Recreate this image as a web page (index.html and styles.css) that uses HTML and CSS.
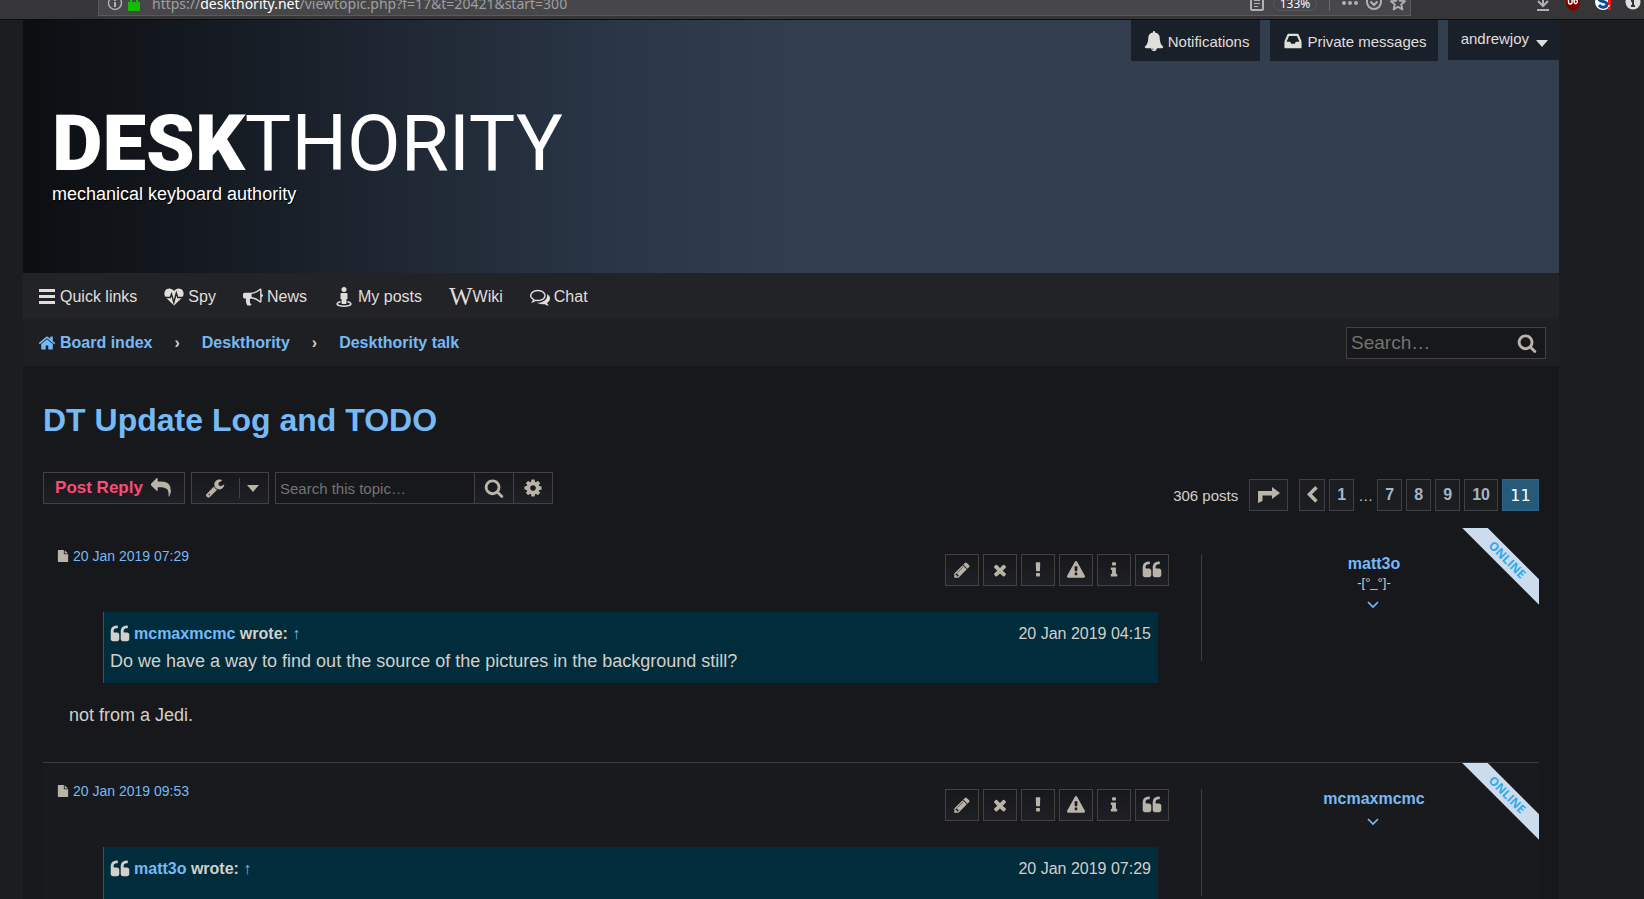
FILE: index.html
```html
<!DOCTYPE html>
<html lang="en">
<head>
<meta charset="utf-8">
<title>DT Update Log and TODO - Deskthority</title>
<link rel="stylesheet" href="styles.css">
</head>
<body>
<svg class="sprite" aria-hidden="true">
  <symbol id="bars" viewBox="0 0 18 18"><path d="M1 1h16v3H1zM1 7h16v3H1zM1 13h16v3H1z"/></symbol>
  <symbol id="search" viewBox="0 0 1792 1792"><path d="M1216 832q0-185-131.500-316.500t-316.500-131.500-316.500 131.500-131.500 316.500 131.500 316.500 316.500 131.500 316.500-131.500 131.500-316.500zm512 832q0 52-38 90t-90 38q-54 0-90-38l-343-342q-179 124-399 124-143 0-273.500-55.500t-225-150-150-225-55.500-273.500 55.500-273.500 150-225 225-150 273.500-55.500 273.500 55.500 225 150 150 225 55.500 273.500q0 220-124 399l343 343q37 37 37 90z"/></symbol>
  <symbol id="home" viewBox="0 0 1792 1792"><path d="M1472 992v480q0 26-19 45t-45 19h-384v-384h-256v384h-384q-26 0-45-19t-19-45v-480q0-1 .5-3t.5-3l575-474 575 474q1 2 1 6zm223-69l-62 74q-8 9-21 11h-3q-13 0-21-7l-692-577-692 577q-12 8-24 7-13-2-21-11l-62-74q-8-10-7-23.500t11-21.500l719-599q32-26 76-26t76 26l244 204v-195q0-14 9-23t23-9h192q14 0 23 9t9 23v408l219 182q10 8 11 21.500t-7 23.500z"/></symbol>
  <symbol id="cog" viewBox="0 0 1792 1792"><path d="M1152 896q0-106-75-181t-181-75-181 75-75 181 75 181 181 75 181-75 75-181zm512-109v222q0 12-8 23t-20 13l-185 28q-19 54-39 91 35 50 107 138 10 12 10 25t-9 23q-27 37-99 108t-94 71q-12 0-26-9l-138-108q-44 23-91 38-16 136-29 186-7 28-36 28h-222q-14 0-24.500-8.500t-11.500-21.500l-28-184q-49-16-90-37l-141 107q-10 9-25 9-14 0-25-11-126-114-165-168-7-10-7-23 0-12 8-23 15-21 51-66.500t54-70.500q-27-50-41-99l-183-27q-13-2-21-12.500t-8-23.500v-222q0-12 8-23t19-13l186-28q14-46 39-92-40-57-107-138-10-12-10-24 0-10 9-23 26-36 98.500-107.500t94.500-71.500q13 0 26 10l138 107q44-23 91-38 16-136 29-186 7-28 36-28h222q14 0 24.500 8.500t11.500 21.500l28 184q49 16 90 37l142-107q9-9 24-9 13 0 25 10 129 119 165 170 7 8 7 22 0 12-8 23-15 21-51 66.500t-54 70.500q26 50 41 98l183 28q13 2 21 12.500t8 23.500z"/></symbol>
  <symbol id="quote" viewBox="0 0 1792 1792"><path d="M832 960v384q0 80-56 136t-136 56h-384q-80 0-136-56t-56-136v-704q0-104 40.500-198.500t109.500-163.500 163.500-109.500 198.500-40.500h64q26 0 45 19t19 45v128q0 26-19 45t-45 19h-64q-106 0-181 75t-75 181v32q0 40 28 68t68 28h224q80 0 136 56t56 136zm896 0v384q0 80-56 136t-136 56h-384q-80 0-136-56t-56-136v-704q0-104 40.500-198.500t109.500-163.500 163.500-109.500 198.500-40.500h64q26 0 45 19t19 45v128q0 26-19 45t-45 19h-64q-106 0-181 75t-75 181v32q0 40 28 68t68 28h224q80 0 136 56t56 136z"/></symbol>
  <symbol id="pencil" viewBox="0 0 1792 1792"><path d="M491 1536l91-91-235-235-91 91v107h128v128h107zm523-928q0-22-22-22-10 0-17 7l-542 542q-7 7-7 17 0 22 22 22 10 0 17-7l542-542q7-7 7-17zm-54-192l416 416-832 832h-416v-416zm683 96q0 53-37 90l-166 166-416-416 166-165q36-38 90-38 53 0 91 38l235 234q37 39 37 91z"/></symbol>
  <symbol id="times" viewBox="0 0 1792 1792"><path d="M1490 1322q0 40-28 68l-136 136q-28 28-68 28t-68-28l-294-294-294 294q-28 28-68 28t-68-28l-136-136q-28-28-28-68t28-68l294-294-294-294q-28-28-28-68t28-68l136-136q28-28 68-28t68 28l294 294 294-294q28-28 68-28t68 28l136 136q28 28 28 68t-28 68l-294 294 294 294q28 28 28 68z"/></symbol>
  <symbol id="exclaim" viewBox="0 0 1792 1792"><path d="M1088 1248v224q0 26-19 45t-45 19h-256q-26 0-45-19t-19-45v-224q0-26 19-45t45-19h256q26 0 45 19t19 45zm30-1056l-28 768q-1 26-20.500 45t-45.500 19h-256q-26 0-45.500-19t-20.500-45l-28-768q-1-26 17.500-45t44.500-19h320q26 0 44.500 19t17.500 45z"/></symbol>
  <symbol id="warning" viewBox="0 0 1792 1792"><path d="M1024 1375v-190q0-14-9.500-23.500t-22.500-9.500h-192q-13 0-22.500 9.500t-9.500 23.500v190q0 14 9.500 23.500t22.500 9.500h192q13 0 22.500-9.500t9.500-23.500zm-2-374l18-459q0-12-10-19-13-11-24-11h-220q-11 0-24 11-10 7-10 21l17 457q0 10 10 16.500t24 6.500h185q14 0 23.500-6.500t10.500-16.500zm-14-934l768 1408q35 63-2 126-17 29-46.500 46t-63.500 17h-1536q-34 0-63.500-17t-46.500-46q-37-63-2-126l768-1408q17-31 47-49t65-18 65 18 47 49z"/></symbol>
  <symbol id="info" viewBox="0 0 1792 1792"><path d="M1216 1344v128q0 26-19 45t-45 19h-512q-26 0-45-19t-19-45v-128q0-26 19-45t45-19h64v-384h-64q-26 0-45-19t-19-45v-128q0-26 19-45t45-19h384q26 0 45 19t19 45v576h64q26 0 45 19t19 45zm-128-1152v192q0 26-19 45t-45 19h-256q-26 0-45-19t-19-45v-192q0-26 19-45t45-19h256q26 0 45 19t19 45z"/></symbol>
  <symbol id="bell" viewBox="0 0 1792 1792"><path d="M912 1696q0-16-16-16-59 0-101.500-42.500t-42.500-101.500q0-16-16-16t-16 16q0 73 51.500 124.500t124.500 51.500q16 0 16-16zm816-288q0 52-38 90t-90 38h-448q0 106-75 181t-181 75-181-75-75-181h-448q-52 0-90-38t-38-90q50-42 91-88t85-119.500 74.500-158.500 50-206 19.500-260q0-152 117-282.500t307-158.500q-8-19-8-39 0-40 28-68t68-28 68 28 28 68q0 20-8 39 190 28 307 158.500t117 282.500q0 139 19.500 260t50 206 74.500 158.500 85 119.500 91 88z"/></symbol>
  <symbol id="inbox" viewBox="0 0 1792 1792"><path d="M1151 960h316q-1-3-2.500-8t-2.500-8l-212-496h-708l-212 496q-1 2-2.500 8t-2.500 8h316l95 192h320zm513 30v482q0 26-19 45t-45 19h-1408q-26 0-45-19t-19-45v-482q0-62 25-123l238-552q10-25 36.500-42t52.500-17h832q26 0 52.500 17t36.500 42l238 552q25 61 25 123z"/></symbol>
  <symbol id="file" viewBox="0 0 1792 1792"><path d="M1152 512v-472q22 14 36 28l408 408q14 14 28 36h-472zm-128 32q0 40 28 68t68 28h544v1056q0 40-28 68t-68 28h-1344q-40 0-68-28t-28-68v-1600q0-40 28-68t68-28h800v544z"/></symbol>
  <symbol id="reply" viewBox="0 0 1792 1792"><path d="M1792 1120q0 166-127 451-3 7-10.500 24t-13.500 30-13 22q-12 17-28 17-15 0-23.500-10t-8.500-25q0-9 2.500-26.500t2.500-23.500q5-68 5-123 0-112-19.500-200.500t-54-153.500-89-112-117-78-142.500-48.500-158.500-24-171.500-6.500h-224v256q0 26-19 45t-45 19-45-19l-512-512q-19-19-19-45t19-45l512-512q19-19 45-19t45 19 19 45v256h224q713 0 875 403 53 134 53 333z"/></symbol>
  <symbol id="wrench" viewBox="0 0 1792 1792"><path d="M448 1472q0-26-19-45t-45-19-45 19-19 45 19 45 45 19 45-19 19-45zm644-420l-682 682q-37 37-90 37-52 0-91-37l-106-108q-38-36-38-90 0-53 38-91l681-681q39 98 114.500 173.500t173.500 114.500zm634-435q0 39-23 106-47 134-164.500 217.500t-258.500 83.500q-185 0-316.500-131.500t-131.500-316.500 131.500-316.500 316.500-131.500q58 0 121.500 16.500t107.500 46.500q16 11 16 28t-16 28l-293 169v224l193 107q5-3 79-48.500t135.500-81 70.500-35.500q15 0 23.500 10t8.500 25z"/></symbol>
  <symbol id="left" viewBox="0 0 1792 1792"><path d="M1427 301l-531 531 531 531q19 19 19 45t-19 45l-166 166q-19 19-45 19t-45-19l-742-742q-19-19-19-45t19-45l742-742q19-19 45-19t45 19l166 166q19 19 19 45t-19 45z"/></symbol>
  <symbol id="bullhorn" viewBox="0 0 1792 1792"><path d="M1664 640q53 0 90.500 37.500t37.500 90.500-37.500 90.500-90.500 37.500v384q0 52-38 90t-90 38q-417-347-812-380-58 19-91 66t-31 100.500 40 92.500q-20 33-23 65.500t6 58 33.500 55 48 50 61.500 50.500q-29 58-111.500 83t-168.500 11.500-132-55.500q-7-23-29.500-87.500t-32-94.500-23-89-15-101 3.500-98.500 22-110.500h-122q-66 0-113-47t-47-113v-192q0-66 47-113t113-47h480q435 0 896-384 52 0 90 38t38 90v384zm-128 604v-954q-394 302-768 343v270q377 42 768 341z"/></symbol>
  <symbol id="comments" viewBox="0 0 1792 1792"><path d="M704 384q-153 0-286 52t-211.500 141-78.500 191q0 82 53 158t149 132l97 56-35 84q34-20 62-39l44-31 53 10q78 14 153 14 153 0 286-52t211.500-141 78.500-191-78.500-191-211.500-141-286-52zm0-128q191 0 353.500 68.500t256.500 186.500 94 257-94 257-256.500 186.500-353.500 68.500q-86 0-176-16-124 88-278 128-36 9-86 16h-3q-11 0-20.500-8t-11.500-21q-1-3-1-6.500t.5-6.500 2-6l2.500-5 3.500-5.500 4-5 4.500-5 4-4.500q5-6 23-25t26-29.500 22.500-29 25-38.500 20.500-44q-124-72-195-177t-71-224q0-139 94-257t256.500-186.500 353.500-68.500zm822 1169q10 24 20.500 44t25 38.500 22.500 29 26 29.500 23 25q1 1 4 4.500t4.500 5 4 5 3.500 5.500l2.500 5 2 6 .5 6.500-1 6.500q-3 14-13 22t-22 7q-50-7-86-16-154-40-278-128-90 16-176 16-271 0-472-132 58 4 88 4 161 0 309-45t264-129q125-92 192-212t67-254q0-77-23-152 129 71 204 178t75 230q0 120-71 224.500t-195 176.500z"/></symbol>
  <symbol id="heartbeat" viewBox="0 0 20 20"><path d="M10 18.500 2 10.800C-.5 8 0 3.500 3 2c2.500-1.200 5.300-.4 7 2 1.700-2.400 4.500-3.200 7-2 3 1.500 3.500 6 1 8.800z"/><path d="M1 10.500h5.200L7.500 7l2.300 8.500L12.300 6l1.500 4.500H19" fill="none" stroke="#222327" stroke-width="1.400"/></symbol>
  <symbol id="person" viewBox="0 0 16 20"><circle cx="8" cy="2.600" r="2.500"/><path d="M5.500 6h5q1 0 1 1v5h-1v4q0 1-1 1h-3q-1 0-1-1v-4h-1V7q0-1 1-1z"/><path d="M4.500 14.800C-1 16 0 19.200 8 19.200s9-3.200 3.500-4.400" fill="none" stroke="currentColor" stroke-width="1.500"/></symbol>
  <symbol id="caret" viewBox="0 0 12 7"><path d="M0 0h12L6 7z"/></symbol>
  <symbol id="jump" viewBox="0 0 22 16"><path d="M0 16V4h14V0l8 6-8 6V8.500H4.500V14z"/></symbol>
  <symbol id="down" viewBox="0 0 12 8"><path d="M1 1l5 5 5-5" fill="none" stroke="currentColor" stroke-width="1.700"/></symbol>
</svg>

<div class="browser">
  <div class="urlbar">
    <svg class="i16" viewBox="0 0 16 16"><circle cx="8" cy="8" r="6.500" fill="none" stroke="currentColor" stroke-width="1.400"/><path d="M7 7h2v5H7zM7 4h2v2H7z"/></svg>
    <svg class="lock" viewBox="0 0 12 16"><path d="M3 8V5q0-3 3-3t3 3v3" fill="none" stroke="currentColor" stroke-width="2"/><path d="M0 7h12v9H0z"/></svg>
    <span class="url">https://<b>deskthority.net</b>/viewtopic.php?f=17&amp;t=20421&amp;start=300</span>
    <svg class="i16" viewBox="0 0 16 16"><rect x="2" y="1" width="12" height="14" rx="1" fill="none" stroke="currentColor" stroke-width="2"/><path d="M5 5h6v1H5zM5 8h6v1H5zM5 11h4v1H5z"/></svg>
    <span class="zoom">133%</span>
    <span class="sep"></span>
    <svg class="i16 dots" viewBox="0 0 16 16"><circle cx="2" cy="8" r="2"/><circle cx="8" cy="8" r="2"/><circle cx="14" cy="8" r="2"/></svg>
    <svg class="i16" viewBox="0 0 16 16"><path d="M1 2h14v5a7 7 0 0 1-14 0zM4.500 6.500 8 10l3.500-3.500" fill="none" stroke="currentColor" stroke-width="2"/></svg>
    <svg class="i16" viewBox="0 0 16 16"><path d="M8 1l2 4.800 5 .4-3.800 3.300 1.200 5L8 11.800l-4.400 2.700 1.200-5L1 6.200l5-.4z" fill="none" stroke="currentColor" stroke-width="1.800" stroke-linejoin="round"/></svg>
  </div>
  <div class="tools">
    <svg class="i16" viewBox="0 0 16 16"><path d="M8 0v11M3 6l5 5 5-5M2 15h12" fill="none" stroke="currentColor" stroke-width="2"/></svg>
    <svg class="i16" viewBox="0 0 16 16"><path d="M1 0h14v9q-1 5-7 7-6-2-7-7z" fill="#800000"/><path d="M3.500 3v4q0 2 1.800 2t1.800-2V3M9 6.500a1.700 2 0 1 1 0 .1V3" fill="none" stroke="#fff" stroke-width="1.400"/></svg>
    <svg class="i16" viewBox="0 0 16 16"><circle cx="8" cy="7" r="8" fill="#fff"/><path d="M12 3C9-1 4 1 4 4s8 2 8 5-5 5-8 1" fill="none" stroke="#0b4a9b" stroke-width="3"/><path d="M13 2h3v8h-3zM13 12h3v3h-3z" fill="#f01414"/></svg>
    <svg class="i16" viewBox="0 0 16 16"><circle cx="8" cy="7" r="7.500" fill="#ddd"/><path d="M7 2h2v2H7zM6 5h3v5h1v2H6v-2h1V7H6z" fill="#333"/></svg>
  </div>
</div>

<div class="page">
  <header class="banner">
    <nav class="account" aria-label="Account">
      <a class="tab" href="#"><svg class="i20"><use href="#bell"/></svg>Notifications</a>
      <a class="tab" href="#"><svg class="i20"><use href="#inbox"/></svg>Private messages</a>
      <button class="tab user" type="button">andrewjoy<svg class="caret"><use href="#caret"/></svg></button>
    </nav>
    <a class="brand" href="#"><strong>DESK</strong>THORITY</a>
    <p class="tagline">mechanical keyboard authority</p>
  </header>

  <nav class="menu" aria-label="Main">
    <a href="#"><svg class="i18"><use href="#bars"/></svg>Quick links</a>
    <a href="#"><svg class="i20"><use href="#heartbeat"/></svg>Spy</a>
    <a href="#"><svg class="i20"><use href="#bullhorn"/></svg>News</a>
    <a href="#"><svg class="i20"><use href="#person"/></svg>My posts</a>
    <a class="wiki" href="#"><span class="w" aria-hidden="true">W</span>Wiki</a>
    <a href="#"><svg class="i20"><use href="#comments"/></svg>Chat</a>
  </nav>

  <div class="crumbs">
    <nav class="trail" aria-label="Breadcrumb">
      <a href="#"><svg class="i18"><use href="#home"/></svg>Board index</a><span>›</span><a href="#">Deskthority</a><span>›</span><a href="#">Deskthority talk</a>
    </nav>
    <form class="sitesearch">
      <input type="search" aria-label="Search" placeholder="Search…">
      <button type="button" aria-label="Search"><svg class="i20"><use href="#search"/></svg></button>
    </form>
  </div>

  <main class="content">
    <h1><a href="#">DT Update Log and TODO</a></h1>

    <div class="actions">
      <a class="box reply" href="#">Post Reply<svg class="i20"><use href="#reply"/></svg></a>
      <button class="box topictools" type="button" aria-label="Topic tools"><svg class="i20"><use href="#wrench"/></svg><span class="split"><svg class="caret"><use href="#caret"/></svg></span></button>
      <form class="topicsearch">
        <input type="search" aria-label="Search this topic" placeholder="Search this topic…">
        <button class="box" type="button" aria-label="Search"><svg class="i20"><use href="#search"/></svg></button>
        <button class="box" type="button" aria-label="Advanced search"><svg class="i20"><use href="#cog"/></svg></button>
      </form>
      <nav class="pages" aria-label="Pages">
        <span class="count">306 posts</span>
        <a class="jump" href="#" aria-label="Jump to page"><svg><use href="#jump"/></svg></a>
        <a href="#" aria-label="Previous"><svg class="i18"><use href="#left"/></svg></a>
        <a href="#">1</a><span class="dotsep">…</span><a href="#">7</a><a href="#">8</a><a href="#">9</a><a href="#">10</a><span class="current">11</span>
      </nav>
    </div>

    <article class="post">
      <div class="body">
        <div class="head">
          <a class="date" href="#"><svg><use href="#file"/></svg>20 Jan 2019 07:29</a>
          <div class="buttons">
            <button class="box" type="button" aria-label="Edit"><svg class="i18"><use href="#pencil"/></svg></button>
            <button class="box" type="button" aria-label="Delete"><svg class="i18"><use href="#times"/></svg></button>
            <button class="box" type="button" aria-label="Report"><svg class="i18"><use href="#exclaim"/></svg></button>
            <button class="box" type="button" aria-label="Warn"><svg class="i18"><use href="#warning"/></svg></button>
            <button class="box" type="button" aria-label="Information"><svg class="i18"><use href="#info"/></svg></button>
            <button class="box" type="button" aria-label="Quote"><svg class="i20"><use href="#quote"/></svg></button>
          </div>
        </div>
        <blockquote>
          <div class="cite"><svg class="i20"><use href="#quote"/></svg><span><a href="#">mcmaxmcmc</a> wrote: <a class="up" href="#">↑</a></span><time>20 Jan 2019 04:15</time></div>
          <p>Do we have a way to find out the source of the pictures in the background still?</p>
        </blockquote>
        <p class="text">not from a Jedi.</p>
      </div>
      <aside class="profile">
        <a href="#">matt3o</a>
        <span class="rank">-[°_°]-</span>
        <button type="button" aria-label="Show profile"><svg><use href="#down"/></svg></button>
      </aside>
      <div class="online"><span>ONLINE</span></div>
    </article>

    <article class="post alt">
      <div class="body">
        <div class="head">
          <a class="date" href="#"><svg><use href="#file"/></svg>20 Jan 2019 09:53</a>
          <div class="buttons">
            <button class="box" type="button" aria-label="Edit"><svg class="i18"><use href="#pencil"/></svg></button>
            <button class="box" type="button" aria-label="Delete"><svg class="i18"><use href="#times"/></svg></button>
            <button class="box" type="button" aria-label="Report"><svg class="i18"><use href="#exclaim"/></svg></button>
            <button class="box" type="button" aria-label="Warn"><svg class="i18"><use href="#warning"/></svg></button>
            <button class="box" type="button" aria-label="Information"><svg class="i18"><use href="#info"/></svg></button>
            <button class="box" type="button" aria-label="Quote"><svg class="i20"><use href="#quote"/></svg></button>
          </div>
        </div>
        <blockquote>
          <div class="cite"><svg class="i20"><use href="#quote"/></svg><span><a href="#">matt3o</a> wrote: <a class="up" href="#">↑</a></span><time>20 Jan 2019 07:29</time></div>
        </blockquote>
      </div>
      <aside class="profile">
        <a href="#">mcmaxmcmc</a>
        <button type="button" aria-label="Show profile"><svg><use href="#down"/></svg></button>
      </aside>
      <div class="online"><span>ONLINE</span></div>
    </article>
  </main>
</div>
</body>
</html>
```
FILE: styles.css
```css
* { box-sizing: border-box; }

body {
  display: flex;
  flex-direction: column;
  margin: 0;
  height: 100vh;
  overflow: hidden;
  background: #1c1d21;
  color: #d3cfc9;
  font-family: "Liberation Sans", Arial, sans-serif;
  font-size: 16px;
}

a { color: #75b9f5; text-decoration: none; }
p, h1, blockquote { margin: 0; }
button, input { font-family: inherit; border-radius: 0; margin: 0; }
button { cursor: pointer; padding: 0; }
input[type="search"] { appearance: none; outline: none; }
input::placeholder { color: #75736f; opacity: 1; }

svg { fill: currentColor; flex: none; display: block; }
.sprite { position: absolute; width: 0; height: 0; }
.i16 { width: 16px; height: 16px; }
.i18 { width: 18px; height: 18px; }
.i20 { width: 20px; height: 20px; }
.caret { width: 12px; height: 7px; }

/* Browser toolbar */
.browser {
  display: flex;
  flex: none;
  height: 20px;
  background: #363638;
  border-bottom: 1px solid #0c0c0d;
  padding-left: 98px;
  color: #b1b1b3;
  overflow: hidden;
}
.urlbar {
  display: flex;
  align-items: flex-end;
  flex: 1;
  height: 16px;
  gap: 8px;
  padding: 0 4px 4px 8px;
  background: #474749;
  border: 1px solid #5a5a5c;
  border-top: 0;
}
.lock { width: 12px; height: 16px; color: #12bc00; margin-left: -3px; }
.url {
  flex: 1;
  margin-left: 4px;
  font: 14px/14px "Noto Sans", sans-serif;
  color: #9f9fa1;
}
.url b { color: #fff; font-weight: 400; }
.zoom {
  width: 44px;
  border: 1px solid #59595b;
  border-radius: 10px;
  text-align: center;
  font: 12px/12px "Noto Sans", sans-serif;
  color: #f9f9fa;
}
.sep { width: 1px; height: 16px; background: #68686a; margin: 0 4px; }
.tools { display: flex; align-items: flex-end; gap: 14px; padding: 0 3px 8px 124px; }

/* Page shell */
.page { flex: 1; min-height: 0; overflow: hidden; margin: 0 85px 0 23px; background: #17181c; }

.banner {
  position: relative;
  height: 253px;
  padding: 84px 29px 0;
  background: linear-gradient(90deg, #0c0e11 0, #1a212b 290px, #2a3646 590px, #323d4e 770px);
}
.account { position: absolute; top: 0; right: 0; display: flex; align-items: flex-start; gap: 10px; }
.tab {
  display: flex;
  align-items: center;
  gap: 4px;
  height: 41px;
  padding: 1px 11px 0 13px;
  background: #19202a;
  border: 0;
  color: #e0deda;
  font-size: 15px;
}
.user { height: 40px; gap: 7px; padding-bottom: 4px; }
.user .caret { margin-top: 9px; }
.brand {
  display: block;
  color: #fff;
  font: 78px/80px Roboto, sans-serif;
}
.brand strong { font-weight: 900; }
.tagline { color: #fff; font-size: 18px; line-height: 20px; text-shadow: 1px 1px 0 #000; }

.menu {
  display: flex;
  align-items: center;
  gap: 27px;
  height: 46px;
  padding: 2px 0 0 15px;
  background: #222327;
}
.menu a { display: flex; align-items: center; gap: 4px; color: #e0deda; }
.menu .wiki { gap: 0; }
.w { font: 25px/24px "Liberation Serif", serif; }

.crumbs {
  display: flex;
  align-items: center;
  justify-content: space-between;
  height: 47px;
  padding: 0 13px 0 15px;
  background: #1e1f23;
}
.trail { display: flex; align-items: center; gap: 22px; padding-top: 1px; font-weight: 700; }
.trail a { display: flex; align-items: center; gap: 4px; }
.sitesearch { display: flex; width: 200px; height: 32px; border: 1px solid #45423d; background: #17181c; }
.sitesearch input { flex: 1; min-width: 0; border: 0; background: none; padding: 0 4px; font-size: 19px; color: #d3cfc9; }
.sitesearch button { border: 0; background: none; width: 36px; color: #b9b3a8; display: flex; align-items: center; justify-content: center; }

/* Topic */
.content { padding: 35px 20px 0; }
h1 { font-size: 32px; line-height: 38px; }

.actions { display: flex; align-items: flex-start; gap: 6px; margin-top: 33px; }
.box {
  display: flex;
  align-items: center;
  justify-content: center;
  height: 32px;
  border: 1px solid #45423d;
  background: linear-gradient(#17181c, #1f2025);
  color: #b9b3a8;
}
.reply { width: 142px; gap: 8px; padding-right: 2px; color: #f94c76; font-size: 17px; font-weight: 700; }
.reply svg { color: #b9b3a8; }
.topictools { width: 78px; gap: 14px; padding-left: 4px; }
.split { display: flex; align-items: center; height: 20px; padding-left: 7px; border-left: 1px solid #45423d; }
.topicsearch { display: flex; }
.topicsearch input {
  width: 200px;
  height: 32px;
  border: 1px solid #45423d;
  background: #17181c;
  padding: 0 4px;
  font-size: 15px;
  color: #d3cfc9;
}
.topicsearch .box { width: 40px; margin-left: -1px; }

.pages { display: flex; align-items: center; gap: 4px; margin: 7px 0 0 auto; }
.pages a, .current {
  display: flex;
  align-items: center;
  justify-content: center;
  min-width: 25px;
  height: 32px;
  padding: 0 7px;
  border: 1px solid #3d4045;
  background: #1c1d21;
  color: #a3b5c6;
  font-weight: 700;
}
.pages a svg { color: #b9b3a8; margin: 0 -4px; }
.pages .jump { width: 39px; margin: 0 7px; }
.jump svg { width: 22px; height: 16px; }
.count { font-size: 15px; }
.dotsep { font-size: 15px; }
.pages .current { width: 37px; background: #265a7b; border-color: #2d6488; color: #fff; font: 16px "DejaVu Sans", sans-serif; }

/* Posts */
.post { position: relative; display: flex; align-items: flex-start; padding-top: 26px; min-height: 234px; }
.actions + .post { margin-top: 17px; }
.alt { border-top: 1px solid #3b3c3f; background: #191a1e; }
.body { flex: 1; padding-left: 14px; }
.head { display: flex; justify-content: space-between; align-items: flex-start; margin-right: 32px; }
.date { display: flex; align-items: center; gap: 4px; margin-top: -6px; font-size: 14px; line-height: 16px; }
.date svg { width: 12px; height: 14px; color: #b9b3a8; }
.buttons { display: flex; gap: 4px; }
.buttons .box { width: 34px; height: 32px; }

blockquote {
  min-height: 71px;
  margin: 26px 43px 0 46px;
  padding: 9px 7px 8px 6px;
  background: #012c3b;
  border-left: 1px solid #2b5768;
}
.cite { display: flex; align-items: center; gap: 4px; height: 26px; font-weight: 700; }
.cite .up { font-weight: 400; }
.cite time { margin-left: auto; font-weight: 400; }
blockquote p { font-size: 18px; line-height: 28px; }
.text { margin: 19px 0 0 12px; font-size: 18px; line-height: 26px; }

.profile {
  display: flex;
  flex-direction: column;
  align-items: center;
  width: 338px;
  min-height: 107px;
  padding-left: 7px;
  border-left: 1px solid #3b3c3f;
}
.profile a { font-weight: 700; line-height: 20px; }
.rank { font-size: 13px; line-height: 18px; }
.profile button { margin: 9px 2px 0 0; border: 0; background: none; color: #75b9f5; }
.profile button svg { width: 12px; height: 8px; }

.online { position: absolute; top: 0; right: 0; width: 77px; height: 77px; overflow: hidden; }
.online span {
  position: absolute;
  top: 23px;
  right: -28px;
  width: 120px;
  background: #cddcec;
  color: #30aaec;
  font: 700 12px/18px "Open Sans", sans-serif;
  text-align: center;
  transform: rotate(45deg);
}
```
